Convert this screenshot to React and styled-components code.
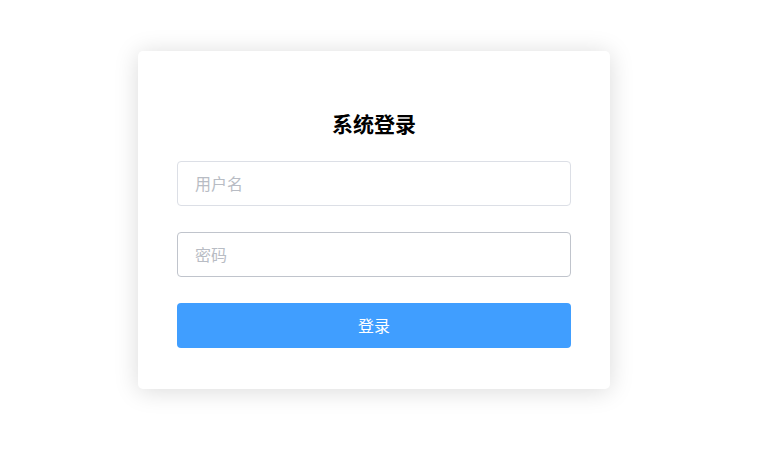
import styled, { createGlobalStyle } from "styled-components";

const GlobalStyle = createGlobalStyle`
  html, body {
    margin: 0;
    padding: 0;
    background: #ffffff;
    font-family: "Noto Sans CJK SC", "Noto Sans", "Liberation Sans", sans-serif;
  }
`;

const Page = styled.div`
  min-height: 475px;
  padding: 51px 0 0 138px;
  box-sizing: border-box;
`;

const LoginCard = styled.form`
  width: 472px;
  height: 338px;
  box-sizing: border-box;
  padding: 58px 39px 0;
  background: #fff;
  border-radius: 5px;
  box-shadow: 0 2px 25px rgba(0, 0, 0, 0.15);
  display: flex;
  flex-direction: column;
`;

const Title = styled.h3`
  margin: 0 0 24px;
  font-size: 21px;
  line-height: 28px;
  font-weight: 700;
  color: #000;
  text-align: center;
`;

const FieldInput = styled.input`
  width: 100%;
  height: 45px;
  box-sizing: border-box;
  padding: 0 17px 2px;
  margin-bottom: ${(p) => p.$gap || 27}px;
  border: 1px solid ${(p) => (p.$active ? "#c0c4cc" : "#dcdfe6")};
  border-radius: 4px;
  font-family: inherit;
  font-size: 16px;
  color: #606266;
  outline: none;
  &::placeholder {
    color: #b8bcc4;
  }
`;

const SubmitButton = styled.button.attrs({ type: "button" })`
  width: 100%;
  height: 45px;
  padding: 0 0 2px;
  border: none;
  border-radius: 4px;
  background: #409eff;
  color: #fff;
  font-family: inherit;
  font-size: 16px;
  cursor: pointer;
`;

export default function App() {
  return (
    <Page>
      <GlobalStyle />
      <LoginCard>
        <Title>系统登录</Title>
        <FieldInput placeholder="用户名" $gap={26} />
        <FieldInput type="password" placeholder="密码" $active $gap={26} />
        <SubmitButton>登录</SubmitButton>
      </LoginCard>
    </Page>
  );
}
